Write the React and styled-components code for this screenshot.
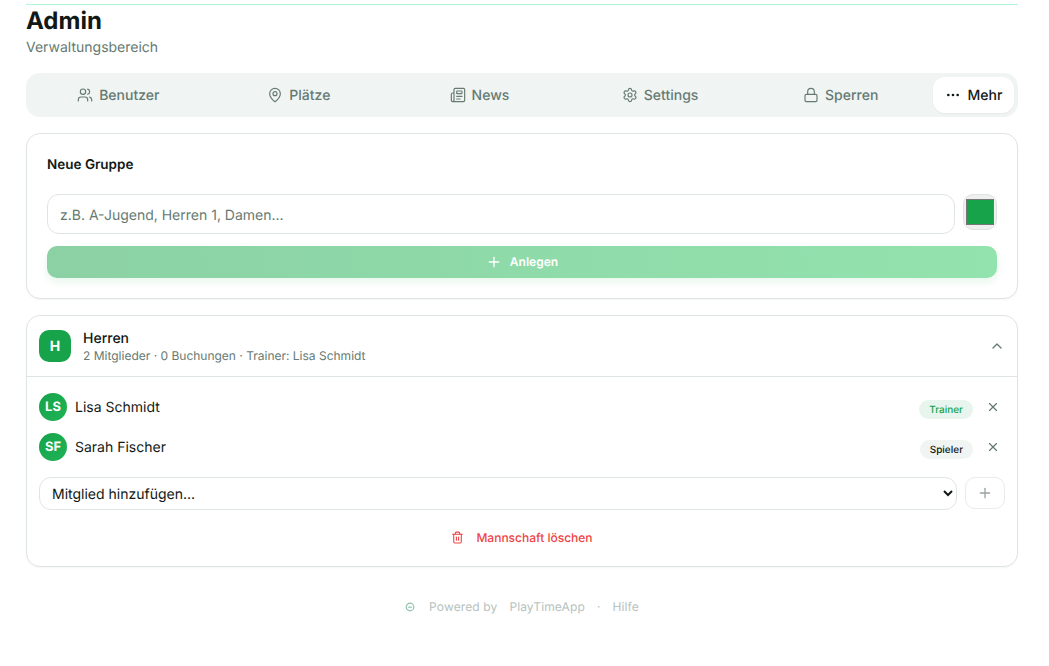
import styled, { createGlobalStyle } from 'styled-components'
import { Users, MapPin, Newspaper, Settings, Lock, Ellipsis, Plus, ChevronUp, X, Trash2 } from 'lucide-react'

const GlobalStyle = createGlobalStyle`
  html, body {
    margin: 0;
    padding: 0;
    background: #fff;
    font-family: Inter, "Liberation Sans", sans-serif;
    color: #111816;
    text-rendering: geometricPrecision;
  }
  * { box-sizing: border-box; }
  button, input, select { text-rendering: geometricPrecision; }
`

const Page = styled.div`
  width: 992px;
  margin-left: 26px;
  padding-top: 4px;
  min-height: 666px;
`

const TopLine = styled.div`
  height: 1px;
  background: #adf5d5;
`

const Title = styled.h1`
  margin: 0;
  padding-top: 1px;
  font-size: 24px;
  line-height: 30px;
  font-weight: 700;
`

const Subtitle = styled.p`
  margin: 2px 0 0;
  font-size: 14px;
  line-height: 20px;
  color: #667a72;
`

const Tabs = styled.nav`
  display: flex;
  align-items: center;
  height: 44px;
  margin-top: 15px;
  padding: 4px;
  background: #f0f4f3;
  border-radius: 14px;
`

const Tab = styled.button`
  flex: ${p => (p.$active ? '0 0 81px' : '1 1 0')};
  height: 36px;
  display: flex;
  align-items: center;
  justify-content: center;
  gap: ${p => (p.$active ? 7 : 6)}px;
  border: 0;
  border-radius: 12px;
  padding: ${p => (p.$active ? '0' : '0 4px 0 0')};
  font: 500 14px Inter, sans-serif;
  color: ${p => (p.$active ? '#111816' : '#667a72')};
  background: ${p => (p.$active ? '#fff' : 'transparent')};
  box-shadow: ${p => (p.$active ? '0 1px 2px rgba(0,0,0,.05)' : 'none')};
`

const Card = styled.section`
  margin-top: 16px;
  background: #fff;
  border: 1px solid #dfe5e3;
  border-radius: 14px;
  box-shadow: 0 1px 2px rgba(0,0,0,.04);
`

const FormCard = styled(Card)`
  height: 166px;
  padding: 21px 20px 20px;
`

const CardTitle = styled.h2`
  margin: 0;
  font-size: 13.5px;
  line-height: 20px;
  font-weight: 600;
`

const FormRow = styled.div`
  display: flex;
  gap: 8px;
  margin-top: 19px;
`

const NameInput = styled.input`
  flex: 1;
  height: 40px;
  padding: 2px 12px 0;
  border: 1px solid #dfe5e3;
  border-radius: 12px;
  font: 400 14px Inter, sans-serif;
  color: #111816;
  &::placeholder { color: #667a72; opacity: 1; }
`

const Swatch = styled.div`
  width: 34px;
  height: 36px;
  padding: 4px 2px;
  background: #efefef;
  border: 1px solid #dfe5e3;
  border-radius: 10px;
  & > div {
    width: 100%;
    height: 100%;
    background: #16a34a;
    border: 1px solid #767676;
  }
`

const CreateButton = styled.button`
  width: 100%;
  height: 32px;
  margin-top: 12px;
  display: flex;
  align-items: center;
  justify-content: center;
  gap: 8px;
  border: 0;
  border-radius: 10px;
  background: linear-gradient(90deg, #8bd1a4, #93e3ae);
  box-shadow: 0 4px 8px rgba(22,163,74,.1);
  color: #fff;
  font: 600 12px Inter, sans-serif;
`

const CreateLabel = styled.span`
  margin-bottom: 2px;
`

const GroupHeader = styled.header`
  height: 61px;
  display: flex;
  align-items: center;
  gap: 12px;
  padding: 0 12px;
  border-bottom: 1px solid #dfe5e3;
`

const GroupBadge = styled.div`
  width: 32px;
  height: 32px;
  display: flex;
  align-items: center;
  justify-content: center;
  border-radius: 10px;
  background: #16a34a;
  color: #fff;
  font-size: 14px;
  font-weight: 700;
`

const GroupInfo = styled.div`
  flex: 1;
`

const GroupName = styled.div`
  padding-top: 2px;
  font-size: 14px;
  line-height: 18px;
  font-weight: 500;
`

const GroupMeta = styled.div`
  font-size: 12px;
  line-height: 16px;
  color: #667a72;
`

const Members = styled.div`
  padding: 16px 12px 0;
  display: flex;
  flex-direction: column;
  gap: 12px;
`

const MemberRow = styled.div`
  height: 28px;
  display: flex;
  align-items: center;
  gap: 8px;
`

const Avatar = styled.div`
  width: 28px;
  height: 28px;
  display: flex;
  align-items: center;
  justify-content: center;
  border-radius: 50%;
  background: linear-gradient(135deg, #16a34a, #1fb356);
  color: #fff;
  font-size: 13px;
  font-weight: 700;
`

const MemberName = styled.span`
  flex: 1;
  font-size: 14px;
`

const RoleTag = styled.span`
  margin-top: 4px;
  padding: 0 10px;
  height: 19px;
  line-height: 21px;
  border-radius: 10px;
  font-size: 10px;
  font-weight: 500;
  color: ${p => (p.$trainer ? '#16a34a' : '#111816')};
  background: ${p => (p.$trainer ? '#e8f5ee' : '#f0f4f3')};
`

const RemoveButton = styled.button`
  width: 24px;
  height: 24px;
  display: flex;
  align-items: center;
  justify-content: center;
  border: 0;
  padding: 0;
  background: transparent;
  color: #667a72;
`

const AddRow = styled.div`
  display: flex;
  gap: 8px;
  padding: 0 12px;
  margin-top: 16px;
`

const MemberSelect = styled.select`
  flex: 1;
  height: 33px;
  padding: 2px 8px 0;
  background: #fff;
  border: 1px solid #dfe5e3;
  border-radius: 12px;
  font: 400 14px Inter, sans-serif;
  color: #111816;
`

const AddButton = styled.button`
  width: 40px;
  height: 32px;
  display: flex;
  align-items: center;
  justify-content: center;
  padding: 0;
  background: #fff;
  border: 1px solid #e8ecea;
  border-radius: 10px;
  color: #9aa5a1;
`

const DeleteButton = styled.button`
  width: 100%;
  height: 32px;
  margin: 11px 0 13px;
  display: flex;
  align-items: center;
  justify-content: center;
  gap: 12px;
  border: 0;
  background: transparent;
  color: #ef4444;
  font: 500 12px Inter, sans-serif;
`

const Footer = styled.footer`
  margin-top: 32px;
  display: flex;
  align-items: center;
  justify-content: center;
  gap: 12px;
  font-size: 12px;
  line-height: 16px;
  letter-spacing: 0.12px;
  color: #b6c2be;
`

const FooterMark = styled.svg`
  margin-right: 2px;
`

const tabs = [
  { label: 'Benutzer', Icon: Users },
  { label: 'Plätze', Icon: MapPin },
  { label: 'News', Icon: Newspaper },
  { label: 'Settings', Icon: Settings },
  { label: 'Sperren', Icon: Lock },
]

const members = [
  { initials: 'LS', name: 'Lisa Schmidt', role: 'Trainer' },
  { initials: 'SF', name: 'Sarah Fischer', role: 'Spieler' },
]

export default function App() {
  return (
    <Page>
      <GlobalStyle />
      <TopLine />
      <Title>Admin</Title>
      <Subtitle>Verwaltungsbereich</Subtitle>

      <Tabs>
        {tabs.map(({ label, Icon }) => (
          <Tab key={label}>
            <Icon size={16} strokeWidth={1.75} />
            {label}
          </Tab>
        ))}
        <Tab $active>
          <Ellipsis size={16} strokeWidth={2} />
          Mehr
        </Tab>
      </Tabs>

      <FormCard>
        <CardTitle>Neue Gruppe</CardTitle>
        <FormRow>
          <NameInput placeholder="z.B. A-Jugend, Herren 1, Damen..." />
          <Swatch><div /></Swatch>
        </FormRow>
        <CreateButton>
          <Plus size={16} />
          <CreateLabel>Anlegen</CreateLabel>
        </CreateButton>
      </FormCard>

      <Card>
        <GroupHeader>
          <GroupBadge>H</GroupBadge>
          <GroupInfo>
            <GroupName>Herren</GroupName>
            <GroupMeta>2 Mitglieder · 0 Buchungen · Trainer: Lisa Schmidt</GroupMeta>
          </GroupInfo>
          <ChevronUp size={16} color="#667a72" />
        </GroupHeader>
        <Members>
          {members.map(m => (
            <MemberRow key={m.name}>
              <Avatar>{m.initials}</Avatar>
              <MemberName>{m.name}</MemberName>
              <RoleTag $trainer={m.role === 'Trainer'}>{m.role}</RoleTag>
              <RemoveButton><X size={14} /></RemoveButton>
            </MemberRow>
          ))}
        </Members>
        <AddRow>
          <MemberSelect>
            <option>Mitglied hinzufügen...</option>
          </MemberSelect>
          <AddButton><Plus size={16} /></AddButton>
        </AddRow>
        <DeleteButton>
          <Trash2 size={13} />
          Mannschaft löschen
        </DeleteButton>
      </Card>

      <Footer>
        <FooterMark width="10" height="10" viewBox="0 0 10 10" fill="none" stroke="#8fc4ac" strokeWidth="1.2">
          <circle cx="5" cy="5" r="3.8" />
          <path d="M3.2 5.2h3.6" />
        </FooterMark>
        <span>Powered by</span>
        <span>PlayTimeApp</span>
        <span>·</span>
        <span>Hilfe</span>
      </Footer>
    </Page>
  )
}
